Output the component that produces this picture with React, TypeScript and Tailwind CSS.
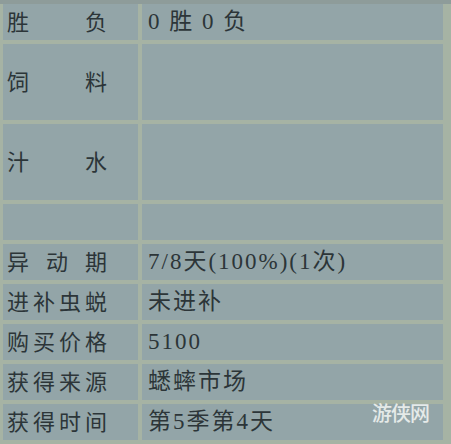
const ROWS: { label: string[]; value: string; tall?: boolean }[] = [
  { label: ['胜', '负'], value: '0 胜 0 负' },
  { label: ['饲', '料'], value: '', tall: true },
  { label: ['汁', '水'], value: '', tall: true },
  { label: [], value: '' },
  { label: ['异', '动', '期'], value: '7/8天(100%)(1次)' },
  { label: ['进', '补', '虫', '蜕'], value: '未进补' },
  { label: ['购', '买', '价', '格'], value: '5100' },
  { label: ['获', '得', '来', '源'], value: '蟋蟀市场' },
  { label: ['获', '得', '时', '间'], value: '第5季第4天' },
]

export default function App() {
  return (
    <div
      className="relative h-[444px] w-[451px] overflow-hidden bg-[#a6b3a4] text-[#2c3538]"
      style={{ fontFamily: '"Liberation Serif", "Noto Sans CJK SC", serif' }}
    >
      <div className="h-[4px] bg-[#8e9c9a]" />
      <div className="grid grid-cols-[135px_301px] gap-[4px] pl-[3px]">
        {ROWS.map((r, i) => (
          <div key={i} className="contents">
            <div
              className={`flex items-center bg-[#93a5a8] pl-[4px] text-[22px] ${r.tall ? 'h-[76px]' : 'h-[36px]'}`}
            >
              <div className="flex w-[100px] justify-between">
                {r.label.map((c, j) => (
                  <span key={j}>{c}</span>
                ))}
              </div>
            </div>
            <div
              className={`flex items-center whitespace-pre bg-[#93a5a8] pl-[6px] text-[23px] tracking-[2px] ${r.tall ? 'h-[76px]' : 'h-[36px]'}`}
            >
              {r.value}
            </div>
          </div>
        ))}
      </div>
      <div
        className="absolute left-[372px] top-[398px] text-[20px] font-medium tracking-[-1px] text-[#eef2f0] opacity-90"
        style={{ fontFamily: '"Noto Sans CJK SC", sans-serif' }}
      >
        游侠网
      </div>
    </div>
  )
}
